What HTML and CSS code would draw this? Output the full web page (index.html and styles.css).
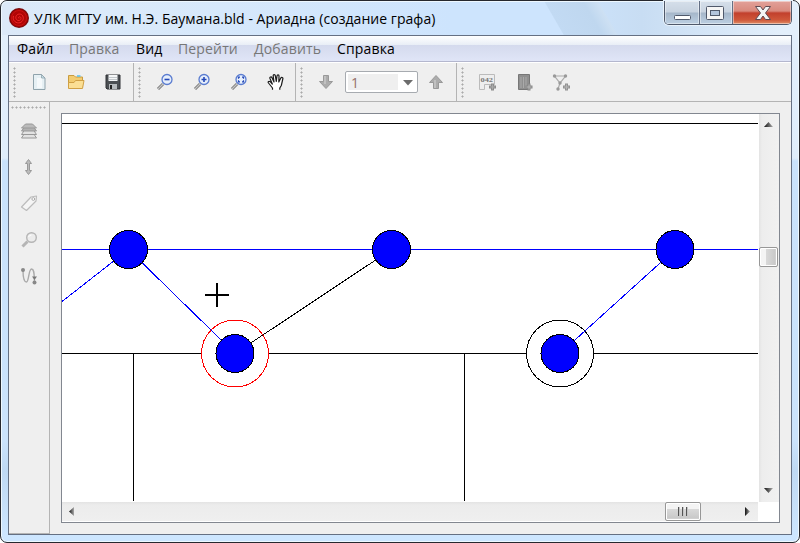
FILE: index.html
```html
<!DOCTYPE html>
<html lang="ru">
<head>
<meta charset="utf-8">
<title>Ариадна</title>
<link rel="stylesheet" href="styles.css">
</head>
<body>
<div class="window">
  <header class="titlebar">
    <svg class="logo" width="20" height="20" viewBox="0 0 20 20"><circle cx="10" cy="10" r="10" fill="#7a0a0a"/><circle cx="10" cy="10" r="8.800" fill="#b00505"/><circle cx="10" cy="10" r="7.500" fill="none" stroke="#c81212" stroke-width="1"/><path d="M10 10.500c-1-.5-.5-2 .8-1.700 2 .5 1.500 3.500-.8 3.700-3 .2-4-3-2.500-5s5-2 6.300.5c1.500 3-.5 6.700-4 6.900-4 .2-6.500-3.500-5.300-7" fill="none" stroke="#f02828" stroke-width="1"/></svg>
    <h1 class="title">УЛК МГТУ им. Н.Э. Баумана.bld - Ариадна (создание графа)</h1>
    <div class="controls">
      <span class="ctl min"><svg width="34" height="23"><rect x="9.500" y="14.500" width="16" height="4" rx="1" fill="#fff" stroke="#50596b"/></svg></span>
      <span class="ctl max"><svg width="32" height="23"><rect x="6.500" y="5.500" width="17" height="13" rx="1" fill="#f5f5f5" stroke="#50596b"/><rect x="10.500" y="9.500" width="9" height="5" fill="#b3c5dc" stroke="#50596b"/></svg></span>
      <span class="ctl close"><svg width="58" height="23"><path d="M22.500 5.500h5l2.500 3.500 2.500-3.500h5l-5 6.500 5 6.500h-5L30 15l-2.500 3.500h-5l5-6.500z" fill="#f4f4f4" stroke="#5e4a52" stroke-linejoin="round"/></svg></span>
    </div>
  </header>
  <main class="client">
    <nav class="menu">
      <span class="mi w1">Файл</span><span class="mi w2 off">Правка</span><span class="mi w3">Вид</span><span class="mi w4 off">Перейти</span><span class="mi w5 off">Добавить</span><span class="mi">Справка</span>
    </nav>
    <div class="toolbars">
      <div class="group g1">
        <i class="grip"></i>
        <span class="btn"><svg width="18" height="18" viewBox="0 0 18 18"><path d="M3.500 1.500h8l3.500 3.500v11.500h-11.500z" fill="#e6f0f4" stroke="#8fa3ac"/><path d="M7 5h5v10H7z" fill="#fff" opacity=".6"/><path d="M11.500 1.500V5H15z" fill="#c7dde4" stroke="#8fa3ac" stroke-width=".8"/></svg></span>
        <span class="btn"><svg width="18" height="18" viewBox="0 0 18 18"><path d="M1.500 14.500v-12h5.500l1.500 1.500h7v10z" fill="#f3cc70" stroke="#c89c40"/><path d="M10 3h3.500" stroke="#5bc1e8" stroke-width="1.500"/><path d="M1.500 15.500V9.500h5.500l1.500-2h8.500l-1.500 8z" fill="#fbdf94" stroke="#d0a044"/></svg></span>
        <span class="btn"><svg width="18" height="18" viewBox="0 0 18 18"><path d="M2 2h14v14H3l-1-1z" fill="#4b4f53" stroke="#303336"/><path d="M4.500 2h9v6h-9z" fill="#f5f7f8"/><path d="M5 4.500h8M5 6.500h8" stroke="#c3c8cc"/><path d="M5 11h8v5H5z" fill="#b5b9bc"/><path d="M6 12h2v4H6z" fill="#222"/></svg></span>
      </div>
      <div class="group g2">
        <i class="grip"></i>
        <span class="btn"><svg class="lens" width="18" height="18" viewBox="0 0 18 18"><path d="M2 16l5-5" class="h1"/><path d="M2 16l5-5" class="h2"/><circle cx="11" cy="6.500" r="5"/><path class="sg" d="M8.500 6.500h5"/></svg></span>
        <span class="btn"><svg class="lens" width="18" height="18" viewBox="0 0 18 18"><path d="M2 16l5-5" class="h1"/><path d="M2 16l5-5" class="h2"/><circle cx="11" cy="6.500" r="5"/><path class="sg" d="M8.500 6.500h5M11 4v5"/></svg></span>
        <span class="btn"><svg class="lens" width="18" height="18" viewBox="0 0 18 18"><path d="M2 16l5-5" class="h1"/><path d="M2 16l5-5" class="h2"/><circle cx="11" cy="6.500" r="5"/><path class="fit" d="M8.500 5.700V4.200H10M12 4.200h1.500v1.500M13.500 7.300v1.500H12M10 8.800H8.500V7.300"/></svg></span>
        <span class="btn"><svg width="18" height="18" viewBox="0 0 18 18"><path d="M5.500 16.800v-1.800L1.500 10C.6 8.800 2 7.700 3.200 8.700L5.300 11 3 5.500C2.400 3.900 4.300 3.200 5 4.700L7 9 6.200 3C6 1.300 8 1 8.300 2.700L9.300 8.500 10 3C10.200 1.400 12.100 1.500 12 3.200L11.800 9 13.700 5.200C14.400 3.800 16.300 4.400 15.800 6L14.300 12.500 12.800 15v1.800" fill="#fff" stroke="#1b1b1b" stroke-width="1.200" stroke-linejoin="round"/></svg></span>
      </div>
      <div class="group g3">
        <i class="grip"></i>
        <span class="btn"><svg width="18" height="18" viewBox="0 0 18 18"><path d="M6.500 2.500h5v6h4L9 15.500 2.500 8.500h4z" fill="#acacac" stroke="#999"/><path d="M8 3v8" stroke="#c9c9c9" stroke-width="1.500"/></svg></span>
        <div class="combo"><span class="val">1</span><svg width="19" height="20"><path d="M5 8h10l-5 5.500z" fill="#6c6c6c"/></svg></div>
        <span class="btn"><svg width="18" height="18" viewBox="0 0 18 18"><path d="M6.500 15.500h5v-6h4L9 2.500 2.500 9.500h4z" fill="#acacac" stroke="#999"/><path d="M8 15V7" stroke="#c9c9c9" stroke-width="1.500"/></svg></span>
      </div>
      <div class="group g4">
        <i class="grip"></i>
        <span class="btn"><svg width="18" height="18" viewBox="0 0 18 18"><path d="M1.500 1.500h15v10h-10v5h-5z" fill="#eee" stroke="#bbb"/><text class="num" x="2.500" y="9" textLength="12.500" lengthAdjust="spacingAndGlyphs">042</text><path d="M14.500 10.500v7M11 14h7" stroke="#8c8c8c" stroke-width="3"/><path d="M14.500 11.500v5M12 14h5" stroke="#aaa"/></svg></span>
        <span class="btn"><svg width="18" height="18" viewBox="0 0 18 18"><path d="M3.500 1.500h11v15h-11z" fill="#8f8f8f" stroke="#777"/><path d="M6 4v11M8.500 4v11M11 4v11" stroke="#aaa"/><path d="M14 10.500v7M10.500 14h7" stroke="#888" stroke-width="3"/><path d="M14 11.500v5M11.500 14h5" stroke="#b5b5b5"/></svg></span>
        <span class="btn"><svg width="18" height="18" viewBox="0 0 18 18"><path d="M2.500 3h11L8 10zM8 10l-2 6" fill="none" stroke="#aaa" stroke-width="1.200"/><g fill="#999"><circle cx="2.500" cy="3" r="1.700"/><circle cx="13.500" cy="3" r="1.700"/><circle cx="8" cy="10" r="1.700"/><circle cx="6" cy="16" r="1.700"/></g><path d="M14.500 10.500v7M11 14h7" stroke="#929292" stroke-width="3"/><path d="M14.500 11.500v5M12 14h5" stroke="#b5b5b5"/></svg></span>
      </div>
    </div>
    <div class="work">
      <aside class="side">
        <i class="grip flat"></i>
        <span class="sbtn"><svg width="18" height="18" viewBox="0 0 18 18"><g fill="#e2e2e2" stroke="#989898" stroke-linejoin="round"><path d="M4.500 11.500h9l3 4.500h-15z"/><path d="M4.500 8h9l3 4.500h-15z"/><path d="M4.500 5h9l3 4h-15z" fill="#b2b2b2"/><path d="M5.500 2h7l4 4H1.500z" fill="#bbb"/></g></svg></span>
        <span class="sbtn"><svg width="18" height="18" viewBox="0 0 18 18"><path d="M8.500 1.500l3 4h-2v7h2l-3 4-3-4h2v-7h-2z" fill="#bbb" stroke="#999"/></svg></span>
        <span class="sbtn"><svg width="18" height="18" viewBox="0 0 18 18"><path d="M1.500 13L11 3l5.500-1-.5 5L6.500 16.500z" fill="#f5f5f5" stroke="#bcbcbc" stroke-width="1.200" stroke-linejoin="round"/><circle cx="13.300" cy="5" r="1.400" fill="#fff" stroke="#aaa"/></svg></span>
        <span class="sbtn"><svg width="18" height="18" viewBox="0 0 18 18"><path d="M2.500 15.500l5-5" stroke="#b5b5b5" stroke-width="3"/><circle cx="11.500" cy="6.500" r="4.800" fill="#ececec" stroke="#b5b5b5" stroke-width="1.400"/><path d="M8.500 6q1-2 3-2" stroke="#fff" fill="none"/></svg></span>
        <span class="sbtn"><svg width="18" height="18" viewBox="0 0 18 18"><path d="M3 3c0 7 1 12 3.500 12S8.500 2 11.500 2s2.500 6 3 12" fill="none" stroke="#aaa" stroke-width="1.400"/><circle cx="3" cy="3" r="2" fill="#888"/><circle cx="14.500" cy="15.500" r="2" fill="#888"/><path d="M12 9.500h5l-2.500 3.500z" fill="#777"/></svg></span>
      </aside>
      <section class="frame">
        <svg class="graph" width="697" height="388" viewBox="62 114 697 388" shape-rendering="crispEdges">
          <g fill="none" stroke="#000">
            <path d="M62 123.500H758M62 353.500H758M133.500 353V501M464.500 353V501"/>
            <path d="M62 249.500H758" stroke="#00f"/>
            <circle cx="235" cy="353.500" r="33.500" fill="#fff" stroke="red"/>
            <circle cx="560" cy="353.500" r="33.500" fill="#fff"/>
            <path d="M62 301.500L128.500 249.500L235 353.500M560 353.500L675 249.500" stroke="#00f"/>
            <path d="M235 353.500L391.500 249.500"/>
            <path d="M205 295H229M217 283V307" stroke-width="2"/>
          </g>
          <g fill="#00f" stroke="#000">
            <circle cx="128.500" cy="249.500" r="19"/><circle cx="391.500" cy="249.500" r="19"/><circle cx="675" cy="249.500" r="19"/><circle cx="235" cy="353.500" r="19"/><circle cx="560" cy="353.500" r="19"/>
          </g>
        </svg>
        <div class="vbar">
          <svg width="19" height="20"><path d="M5 13l4.500-5 4.500 5z" fill="url(#ar)"/><defs><linearGradient id="ar"><stop stop-color="#111"/><stop offset="1" stop-color="#aaa"/></linearGradient></defs></svg>
          <span class="vthumb"></span>
          <svg width="19" height="20"><path d="M5 6h9l-4.500 5z" fill="url(#ar)"/></svg>
        </div>
        <div class="hbar">
          <svg width="19" height="19"><path d="M12 5v9L7 9.500z" fill="url(#ar)"/></svg>
          <span class="hthumb"><svg width="12" height="9"><path d="M1.500 0v9M5.500 0v9M9.500 0v9" stroke="#555"/><path d="M2.500 0v9M6.500 0v9M10.500 0v9" stroke="#c5c5c5"/></svg></span>
          <svg width="19" height="19"><path d="M6 5v9l5-4.500z" fill="url(#ar)"/></svg>
        </div>
      </section>
    </div>
  </main>
</div>
</body>
</html>
```
FILE: styles.css
```css
* { box-sizing: border-box; }
body { margin: 0; background: #fff; font-family: "Open Sans", "Noto Sans", sans-serif; font-size: 14px; color: #000; overflow: hidden; }
svg { display: block; flex: none; }
.window {
  width: 800px; height: 543px; padding: 0 7px 7px;
  border: 1px solid #26282e; border-radius: 7px;
  background: linear-gradient(180deg, #e3effb 0, #dfedfb 157px, #c9e2fc 160px, #cbe3fc 440px, #bfd9f3 470px, #cde6ff 535px);
  box-shadow: inset 0 0 0 1px #eef8ff;
}
.titlebar {
  height: 34px; margin: 0 -6px; padding: 0 6px 0 7px; display: flex; align-items: flex-start;
  border-radius: 6px 6px 0 0; border-top: 1px solid #eef8ff;
  background: linear-gradient(60deg, transparent 486px, #c2daf3 487px, #bfd7ef 520px, #cde0f3 532px, transparent 534px),
    linear-gradient(90deg, #dce9f8 0, #dbeafa 100px, #cde4fd 450px, #cde4fd 560px, #c8ddf3 640px, #e3effb 780px);
}
.logo { margin: 6px 5px 0 0; }
.title { margin: 7px 0 0; font-size: 14px; font-weight: 400; line-height: 20px; white-space: nowrap; letter-spacing: .04px; }
.controls { display: flex; margin: -1px 0 0 auto; width: 128px; height: 24px; border: 1px solid #4f586a; border-top: 0; border-radius: 0 0 5px 5px; overflow: hidden; box-shadow: 0 0 0 1px #e8f2fb; }
.ctl { height: 23px; box-shadow: inset 0 0 0 1px rgba(255,255,255,.45); background: linear-gradient(#d5dfea, #c8d3e0 11px, #a6b7ca 12px, #bccfe2); }
.min { width: 35px; border-right: 1px solid #647085; }
.max { width: 33px; border-right: 1px solid #647085; }
.close { flex: 1; background: linear-gradient(#e2a19a, #d98a7e 10px, #c2402d 12px, #cf583a 19px, #e08d66); }
.client { width: 784px; height: 500px; border: 1px solid #657083; background: #efefef; display: flex; flex-direction: column; }
.menu { height: 26px; border-bottom: 1px solid #b4b7ce; padding-left: 8px; display: flex; line-height: 25px; background: linear-gradient(#fff, #e8eef6 9px, #d4daed 9px, #e0e5f7 25px); white-space: nowrap; letter-spacing: .15px; }
.off { color: #777; }
.w1 { width: 52px; } .w2 { width: 67px; } .w3 { width: 42px; } .w4 { width: 76px; } .w5 { width: 83px; }
.toolbars { height: 40px; display: flex; border-top: 1px solid #fff; border-bottom: 1px solid #b4b4b4; }
.group { display: flex; align-items: center; border-right: 1px solid #b4b4b4; }
.g1 { width: 125px; } .g2 { width: 162px; } .g3 { width: 161px; } .g4 { flex: 1; border: 0; }
.grip { flex: none; width: 3px; height: 32px; margin: 0 4px; background: radial-gradient(circle at 1.500px 1.500px, #aaa 0 .8px, transparent 1.300px) 0 1px / 3px 4px; }
.g2 .grip { margin-right: 5px; }
.btn { width: 37px; height: 36px; flex: none; display: flex; align-items: center; justify-content: center; }
.lens { fill: none; }
.lens circle { fill: #e7effb; stroke: #5a7cd0; stroke-width: 1.300; }
.h1 { stroke: #777; stroke-width: 3; }
.h2 { stroke: #c5c5c5; stroke-width: 1.200; }
.sg { stroke: #2448b8; stroke-width: 1.600; }
.fit { stroke: #2448b8; stroke-width: 1.200; }
.combo { width: 73px; height: 22px; flex: none; display: flex; border: 1px solid #a7abb0; border-radius: 2px; background: #fff; margin-left: 1px; margin-right: -1px; }
.val { width: 51px; height: 16px; margin: 2px 0 0 2px; padding-left: 3px; line-height: 17px; font-size: 14px; background: #efefef; color: #95706a; }
.num { font: bold 7px "Liberation Serif", serif; fill: #777; }
.work { flex: 1; display: flex; }
.side { width: 41px; border-right: 1px solid #b4b4b4; border-bottom: 1px solid #b4b4b4; display: flex; flex-direction: column; align-items: center; }
.flat { width: 36px; height: 3px; margin: 4px 0; background-position: 0 0; background-size: 4px 3px; }
.sbtn { width: 37px; height: 36.200px; display: flex; align-items: center; justify-content: center; }
.frame { width: 719px; height: 410px; margin: 11px 0 0 11px; border: 1px solid #828790; background: #fff; display: grid; grid-template-columns: 697px 20px; grid-template-rows: 388px 20px; }
.vbar { background: linear-gradient(90deg, #e3e3e3, #ededed 3px, #f1f1f1); display: flex; flex-direction: column; width: 20px; }
.vthumb { width: 19px; height: 20px; margin: 113px 0 auto; border: 1px solid #979797; border-radius: 2px; box-shadow: inset 0 0 0 1px #fff; background: linear-gradient(90deg, #f4f4f4 0 6px, #d9d9d9 6px, #c9c9c9 15px, #e5e5e5); }
.hbar { background: linear-gradient(#e3e3e3, #ececec 3px, #efefef); display: flex; width: 696px; height: 19px; }
.hthumb { width: 36px; height: 19px; margin-left: 584px; margin-right: auto; border: 1px solid #979797; border-radius: 2px; box-shadow: inset 0 0 0 1px #fff; background: linear-gradient(#f4f4f4 0 6px, #d9d9d9 6px, #c9c9c9 15px, #e5e5e5); display: flex; align-items: center; justify-content: center; }
```
